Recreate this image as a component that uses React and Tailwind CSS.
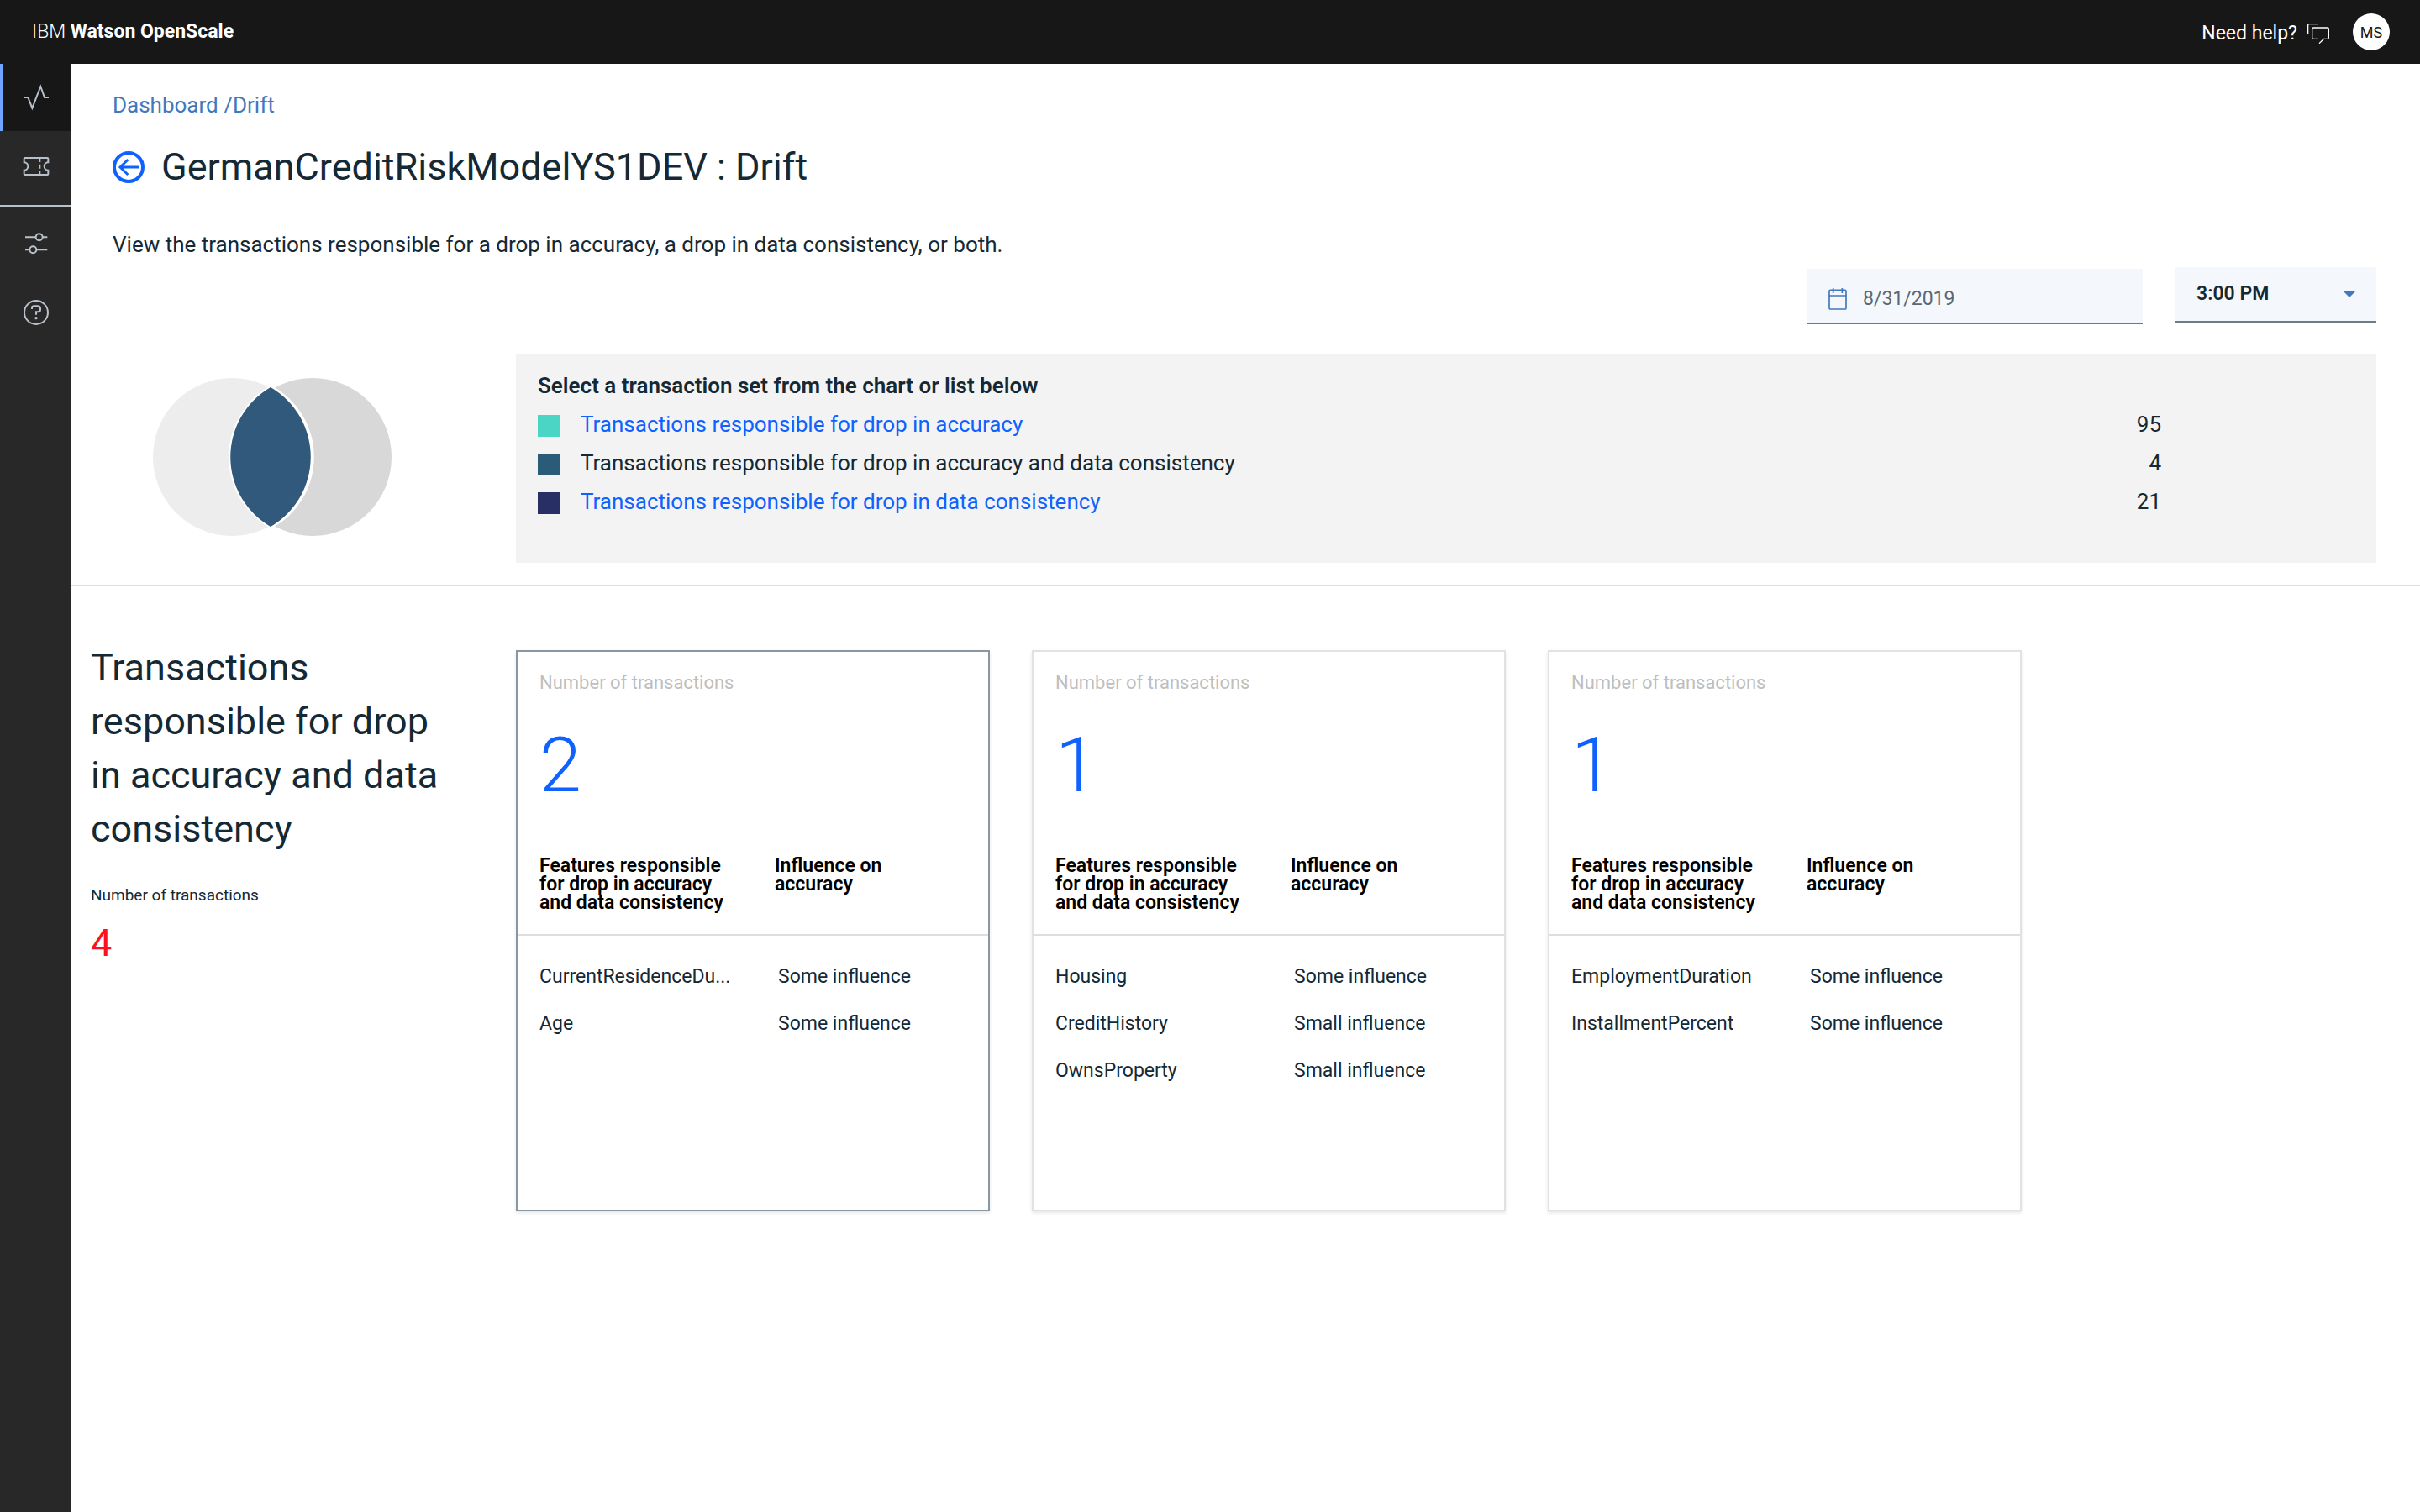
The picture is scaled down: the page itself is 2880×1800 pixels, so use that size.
const NAV = [
  {
    label: "Insights",
    active: true,
    icon: <path d="M0 45H16L31 83L61 6L75 45H90" />,
  },
  {
    label: "Tickets",
    icon: (
      <>
        <path d="M5 15H85Q88 15 88 18V31A14 14 0 0 0 88 59V72Q88 75 85 75H5Q2 75 2 72V59A14 14 0 0 0 2 31V18Q2 15 5 15Z" />
        <path d="M58 15V30M58 38V53M58 61V75" />
      </>
    ),
  },
  {
    label: "Configure",
    icon: (
      <>
        <path d="M6 22H42M69 22H85M6 67H21M47 67H85" />
        <circle cx="56" cy="22" r="12" />
        <circle cx="34" cy="67" r="12" />
      </>
    ),
  },
  {
    label: "Help",
    icon: (
      <>
        <circle cx="45" cy="45" r="42" />
        <path d="M30 33V29Q30 22 38 22H50Q60 22 60 30V35Q60 43 51 43H45V53" />
        <circle cx="45" cy="65" r="2" fill="currentColor" />
      </>
    ),
  },
];

const SETS = [
  { label: "Transactions responsible for drop in accuracy", count: 95, swatch: "bg-[#4bd5c4]" },
  { label: "Transactions responsible for drop in accuracy and data consistency", count: 4, swatch: "bg-[#2a5c7a]", selected: true },
  { label: "Transactions responsible for drop in data consistency", count: 21, swatch: "bg-[#272f64]" },
];

const CARDS = [
  {
    count: 2,
    selected: true,
    rows: [
      ["CurrentResidenceDu...", "Some influence"],
      ["Age", "Some influence"],
    ],
  },
  {
    count: 1,
    rows: [
      ["Housing", "Some influence"],
      ["CreditHistory", "Small influence"],
      ["OwnsProperty", "Small influence"],
    ],
  },
  {
    count: 1,
    rows: [
      ["EmploymentDuration", "Some influence"],
      ["InstallmentPercent", "Some influence"],
    ],
  },
];

function Header() {
  return (
    <header className="flex h-[76px] items-center justify-between bg-[#171717] pr-9 pl-[38px] text-[23px] text-white">
      <a href="#home" className="font-light">
        IBM <span className="font-bold">Watson OpenScale</span>
      </a>
      <div className="flex items-center gap-7">
        <a href="#support" className="flex items-center gap-3 pt-1">
          Need help?
          <svg viewBox="0 0 78 72" className="h-6 w-[26px]" fill="none" stroke="currentColor" strokeWidth="4" strokeLinejoin="round" aria-hidden="true">
            <path d="M2 38V5Q2 2 5 2H39" />
            <path d="M39 55H21Q17 55 17 51V19Q17 15 21 15H72Q76 15 76 19V51Q76 55 72 55H59L42 71" />
          </svg>
        </a>
        <button className="flex size-11 items-center justify-center rounded-full bg-white text-[18px] text-[#171717]">MS</button>
      </div>
    </header>
  );
}

function Sidebar() {
  return (
    <nav className="w-[84px] shrink-0 bg-[#282828] text-[#b8c1c9]">
      <ul>
        {NAV.map(({ label, active, icon }, i) => (
          <li key={label} className={i === 1 ? "mb-1 border-b-2 border-[#b8c1c9] pb-[6px]" : "mb-[2px]"}>
            <a
              href={`#${label.toLowerCase()}`}
              aria-label={label}
              className={`flex h-20 items-center border-l-4 pl-6 ${active ? "border-[#6ea6ff] bg-[#171717]" : "border-transparent"}`}
            >
              <svg viewBox="0 0 90 90" className="size-[30px] overflow-visible" fill="none" stroke="currentColor" strokeWidth="6" aria-hidden="true">
                {icon}
              </svg>
            </a>
          </li>
        ))}
      </ul>
    </nav>
  );
}

function Venn() {
  return (
    <svg viewBox="0 0 284 188" className="h-[188px] w-[284px]" role="img" aria-label="Overlap of transaction sets">
      <circle cx="94" cy="94" r="94" fill="#ededed" />
      <circle cx="190" cy="94" r="94" fill="#d8d8d8" />
      <path d="M143 11A96 96 0 0 1 143 177A96 96 0 0 1 143 11Z" fill="#fff" stroke="#fff" strokeWidth="2" />
      <path d="M140 11A96 96 0 0 1 140 177A96 96 0 0 1 140 11Z" fill="#31597b" stroke="#fff" strokeWidth="4" paintOrder="stroke" />
    </svg>
  );
}

function Card({ count, rows, selected }) {
  return (
    <article className={`min-h-[668px] border-2 bg-white pt-[21px] shadow-[0_2px_4px_rgba(0,0,0,0.1)] ${selected ? "border-[#8897a2]" : "border-[#dfe3e6]"}`}>
      <p className="px-[26px] text-[22px] leading-8 text-[#bebebe]">Number of transactions</p>
      <p className="mt-[35px] px-[26px] text-[90px] leading-24 font-light text-[#0f62fe]">{count}</p>
      <table className="mt-[60px] w-full table-fixed text-left text-[23px]">
        <thead className="border-b-2 border-[#dcdfe0] leading-[22px] text-black">
          <tr className="align-top">
            <th scope="col" className="w-[306px] pr-[50px] pb-[26px] pl-[26px] font-semibold">
              Features responsible for drop in accuracy and data consistency
            </th>
            <th scope="col" className="pr-16 pb-[26px] font-semibold">Influence on accuracy</th>
          </tr>
        </thead>
        <tbody className="leading-[56px] [&>tr:first-child>td]:pt-[21px]">
          {rows.map(([feature, influence]) => (
            <tr key={feature}>
              <td className="pl-[26px]">{feature}</td>
              <td className="pl-1">{influence}</td>
            </tr>
          ))}
        </tbody>
      </table>
    </article>
  );
}

export default function App() {
  return (
    <div className="flex min-h-screen flex-col bg-white font-['Roboto',sans-serif] text-[#152935]">
      <Header />
      <div className="flex flex-1">
        <Sidebar />
        <main className="min-w-0 flex-1">
          <section className="border-b-2 border-[#dfdfdf] pt-[29px] pr-[52px] pb-[26px]">
            <div className="pl-[50px]">
              <div className="text-[26px] leading-10 text-[#4178be]">
                <a href="#dashboard">Dashboard</a> /<a href="#drift">Drift</a>
              </div>
              <div className="mt-[26px] flex items-center gap-5">
                <button aria-label="Back" className="text-[#0f62fe]">
                  <svg viewBox="0 0 114 114" className="size-[38px]" fill="none" stroke="currentColor" strokeWidth="12" aria-hidden="true">
                    <circle cx="57" cy="57" r="51" />
                    <path d="M96 57H27M55 30L27 57L55 84" strokeWidth="9" />
                  </svg>
                </button>
                <h1 className="text-[45px] leading-14">GermanCreditRiskModelYS1DEV : Drift</h1>
              </div>
              <p className="mt-11 text-[26px] leading-10">
                View the transactions responsible for a drop in accuracy, a drop in data consistency, or both.
              </p>
            </div>
            <div className="mt-[7px] flex items-end justify-end gap-[38px] text-[23px]">
              <label className="flex h-[66px] w-[400px] items-center gap-[19px] border-b-2 border-[#6f7b84] bg-[#f4f7fb] pt-2 pl-[26px]">
                <svg viewBox="0 0 66 78" className="h-[26px] w-[22px]" fill="none" stroke="#4178be" strokeWidth="5" aria-hidden="true">
                  <rect x="3" y="7" width="60" height="68" rx="4" />
                  <path d="M2 27H64M17 0V18M49 0V18" />
                </svg>
                <input type="text" aria-label="Date" defaultValue="8/31/2019" className="min-w-0 flex-1 bg-transparent text-[#5a6872] outline-none" />
              </label>
              <div className="mb-[2px] grid h-[66px] w-60 items-center border-b-2 border-[#6f7b84] bg-[#f4f7fb]">
                <select aria-label="Time" className="col-start-1 row-start-1 h-full w-full appearance-none bg-transparent pl-[26px] font-semibold outline-none">
                  <option>3:00 PM</option>
                </select>
                <svg viewBox="0 0 16 8" className="pointer-events-none col-start-1 row-start-1 mr-6 h-2 w-4 justify-self-end" fill="#4178be" aria-hidden="true">
                  <path d="M0 0H16L8 8Z" />
                </svg>
              </div>
            </div>
            <div className="mt-9 flex">
              <div className="w-[530px] shrink-0 pt-7 pl-[98px]">
                <Venn />
              </div>
              <div className="flex-1 bg-[#f3f3f3] pt-[14px] pr-64 pb-[50px] pl-[26px] text-[26px] leading-[46px]">
                <h2 className="font-semibold">Select a transaction set from the chart or list below</h2>
                <ul>
                  {SETS.map(({ label, count, swatch, selected }) => (
                    <li key={label} className="flex items-start">
                      <span className={`mt-3 mr-[25px] size-[26px] ${swatch}`} />
                      <button className={selected ? "" : "text-[#0f62fe]"}>{label}</button>
                      <span className="ml-auto">{count}</span>
                    </li>
                  ))}
                </ul>
              </div>
            </div>
          </section>
          <section className="flex">
            <div className="w-[530px] shrink-0 pt-[65px] pr-[66px] pl-6">
              <h2 className="text-[45px] leading-16">Transactions responsible for drop in accuracy and data consistency</h2>
              <p className="mt-[33px] text-[19px] leading-7">Number of transactions</p>
              <p className="mt-[11px] text-[45px] leading-16 text-[#ff1020]">4</p>
            </div>
            <div className="grid max-w-[1792px] flex-1 grid-cols-3 gap-[50px] pt-[76px]">
              {CARDS.map((card, i) => (
                <Card key={i} {...card} />
              ))}
            </div>
          </section>
        </main>
      </div>
    </div>
  );
}
